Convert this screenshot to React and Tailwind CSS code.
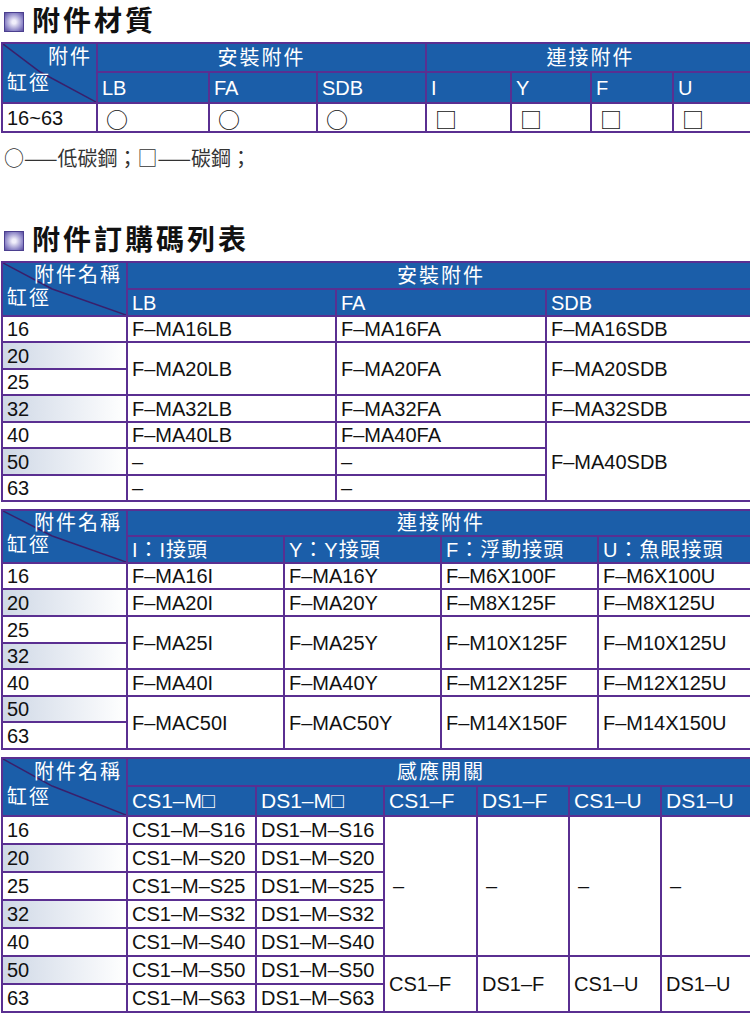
import React from 'react';

const B = 'border-2 border-[#5a2f91]';
const F = { fontFamily: '"Liberation Sans", "Noto Sans CJK TC", sans-serif' };

function Title({ text }) {
  return (
    <div className="flex items-center gap-2 pl-1 h-[36px]">
      <div className="w-[20px] h-[20px] border border-[#4b3f8f] bg-[radial-gradient(circle,#f0eefa_15%,#8c85c6_70%,#5b4fa0)]" />
      <div className="text-[28px] leading-none font-bold tracking-[3px] text-[#111]">{text}</div>
    </div>
  );
}

function Corner({ top, bottom, h1, h2 }) {
  return (
    <th rowSpan={2} className={`${B} relative p-0 align-top`} style={{ height: h1 + h2 }}>
      <svg className="absolute inset-0 w-full h-full" preserveAspectRatio="none" viewBox="0 0 100 100">
        <line x1="0" y1="0" x2="40" y2={(h1 / (h1 + h2)) * 100} stroke="#3a1f6b" strokeWidth="1.5" vectorEffect="non-scaling-stroke" />
        <line x1="40" y1={(h1 / (h1 + h2)) * 100} x2="100" y2="100" stroke="#3a1f6b" strokeWidth="1.5" vectorEffect="non-scaling-stroke" />
      </svg>
      <div className="relative flex flex-col h-full font-normal">
        <div className="text-right pr-1 tracking-[2px]" style={{ height: h1 - 2, lineHeight: h1 - 2 + 'px' }}>{top}</div>
        <div className="text-left pl-1 tracking-[2px]" style={{ lineHeight: h2 - 6 + 'px' }}>{bottom}</div>
      </div>
    </th>
  );
}

const th = `${B} font-normal text-left pl-1 p-0 leading-[20px]`;
const td = `${B} px-1 py-0 text-left leading-[20px]`;
const grad = 'bg-gradient-to-r from-[#cfd8e6] to-white';
const tbl = 'border-collapse table-fixed w-[753px] ml-[1px] text-[20px]';

export default function App() {
  return (
    <div className="w-[750px] overflow-hidden bg-white text-[20px] text-[#111]" style={F}>
      <div className="pt-[4px]"><Title text="附件材質" /></div>
      <table className={`${tbl} mt-[2px]`}>
        <colgroup>
          {[95, 112, 108, 109, 85, 80, 82, 82].map((w, i) => <col key={i} style={{ width: w }} />)}
        </colgroup>
        <thead className="bg-[#1b5ea9] text-white">
          <tr className="h-[29px]">
            <Corner top="附件" bottom="缸徑" h1={29} h2={31} />
            <th colSpan={3} className={`${B} font-normal text-center tracking-[2px] leading-[20px]`}>安裝附件</th>
            <th colSpan={4} className={`${B} font-normal text-center tracking-[2px] leading-[20px]`}>連接附件</th>
          </tr>
          <tr className="h-[31px]">
            {['LB', 'FA', 'SDB', 'I', 'Y', 'F', 'U'].map(t => <th key={t} className={th}>{t}</th>)}
          </tr>
        </thead>
        <tbody>
          <tr className="h-[29px]">
            <td className={td}>16~63</td>
            {['○', '○', '○', '□', '□', '□', '□'].map((t, i) => <td key={i} className={`${td} pl-2 text-[22px]`} style={{ fontFamily: '"Noto Sans CJK TC", sans-serif' }}>{t}</td>)}
          </tr>
        </tbody>
      </table>
      <div className="mt-[10px] pl-1 text-[#333] text-[20px]" style={{ fontFamily: '"Noto Sans CJK TC", sans-serif' }}>○——低碳鋼；□——碳鋼；</div>

      <div className="mt-[50px]"><Title text="附件訂購碼列表" /></div>
      <table className={`${tbl} mt-[2px]`}>
        <colgroup>{[125, 209, 210, 209].map((w, i) => <col key={i} style={{ width: w }} />)}</colgroup>
        <thead className="bg-[#1b5ea9] text-white">
          <tr className="h-[27px]">
            <Corner top="附件名稱" bottom="缸徑" h1={27} h2={27} />
            <th colSpan={3} className={`${B} font-normal text-center tracking-[2px] leading-[20px]`}>安裝附件</th>
          </tr>
          <tr className="h-[27px]">
            {['LB', 'FA', 'SDB'].map(t => <th key={t} className={th}>{t}</th>)}
          </tr>
        </thead>
        <tbody>
          <tr className="h-[26px]"><td className={td}>16</td><td className={td}>F–MA16LB</td><td className={td}>F–MA16FA</td><td className={td}>F–MA16SDB</td></tr>
          <tr className="h-[27px]"><td className={`${td} ${grad}`}>20</td><td rowSpan={2} className={td}>F–MA20LB</td><td rowSpan={2} className={td}>F–MA20FA</td><td rowSpan={2} className={td}>F–MA20SDB</td></tr>
          <tr className="h-[26px]"><td className={td}>25</td></tr>
          <tr className="h-[27px]"><td className={`${td} ${grad}`}>32</td><td className={td}>F–MA32LB</td><td className={td}>F–MA32FA</td><td className={td}>F–MA32SDB</td></tr>
          <tr className="h-[26px]"><td className={td}>40</td><td className={td}>F–MA40LB</td><td className={td}>F–MA40FA</td><td rowSpan={3} className={td}>F–MA40SDB</td></tr>
          <tr className="h-[27px]"><td className={`${td} ${grad}`}>50</td><td className={td}>–</td><td className={td}>–</td></tr>
          <tr className="h-[26px]"><td className={td}>63</td><td className={td}>–</td><td className={td}>–</td></tr>
        </tbody>
      </table>

      <table className={`${tbl} mt-[7px]`}>
        <colgroup>{[125, 157, 157, 157, 157].map((w, i) => <col key={i} style={{ width: w }} />)}</colgroup>
        <thead className="bg-[#1b5ea9] text-white">
          <tr className="h-[26px]">
            <Corner top="附件名稱" bottom="缸徑" h1={26} h2={27} />
            <th colSpan={4} className={`${B} font-normal text-center tracking-[2px] leading-[20px]`}>連接附件</th>
          </tr>
          <tr className="h-[27px]">
            {['I：I接頭', 'Y：Y接頭', 'F：浮動接頭', 'U：魚眼接頭'].map(t => <th key={t} className={`${th} tracking-[1px]`}>{t}</th>)}
          </tr>
        </thead>
        <tbody>
          <tr className="h-[26px]"><td className={td}>16</td><td className={td}>F–MA16I</td><td className={td}>F–MA16Y</td><td className={td}>F–M6X100F</td><td className={td}>F–M6X100U</td></tr>
          <tr className="h-[27px]"><td className={`${td} ${grad}`}>20</td><td className={td}>F–MA20I</td><td className={td}>F–MA20Y</td><td className={td}>F–M8X125F</td><td className={td}>F–M8X125U</td></tr>
          <tr className="h-[27px]"><td className={td}>25</td><td rowSpan={2} className={td}>F–MA25I</td><td rowSpan={2} className={td}>F–MA25Y</td><td rowSpan={2} className={td}>F–M10X125F</td><td rowSpan={2} className={td}>F–M10X125U</td></tr>
          <tr className="h-[26px]"><td className={`${td} ${grad}`}>32</td></tr>
          <tr className="h-[27px]"><td className={td}>40</td><td className={td}>F–MA40I</td><td className={td}>F–MA40Y</td><td className={td}>F–M12X125F</td><td className={td}>F–M12X125U</td></tr>
          <tr className="h-[26px]"><td className={`${td} ${grad}`}>50</td><td rowSpan={2} className={td}>F–MAC50I</td><td rowSpan={2} className={td}>F–MAC50Y</td><td rowSpan={2} className={td}>F–M14X150F</td><td rowSpan={2} className={td}>F–M14X150U</td></tr>
          <tr className="h-[27px]"><td className={td}>63</td></tr>
        </tbody>
      </table>

      <table className={`${tbl} mt-[7px]`}>
        <colgroup>{[125, 129, 128, 93, 92, 92, 94].map((w, i) => <col key={i} style={{ width: w }} />)}</colgroup>
        <thead className="bg-[#1b5ea9] text-white">
          <tr className="h-[28px]">
            <Corner top="附件名稱" bottom="缸徑" h1={28} h2={30} />
            <th colSpan={6} className={`${B} font-normal text-center tracking-[2px] leading-[20px]`}>感應開關</th>
          </tr>
          <tr className="h-[30px]">
            {['CS1–M□', 'DS1–M□', 'CS1–F', 'DS1–F', 'CS1–U', 'DS1–U'].map(t => <th key={t} className={`${th} text-[21px]`}>{t}</th>)}
          </tr>
        </thead>
        <tbody>
          {['16', '20', '25', '32', '40', '50', '63'].map((n, i) => (
            <tr key={n} className="h-[28px]">
              <td className={`${td} ${i % 2 ? grad : ''}`}>{n}</td>
              <td className={td}>CS1–M–S{n}</td>
              <td className={td}>DS1–M–S{n}</td>
              {i === 0 && ['–', '–', '–', '–'].map((t, j) => <td key={j} rowSpan={5} className={`${td} pl-2`}>{t}</td>)}
              {i === 5 && ['CS1–F', 'DS1–F', 'CS1–U', 'DS1–U'].map(t => <td key={t} rowSpan={2} className={td}>{t}</td>)}
            </tr>
          ))}
        </tbody>
      </table>
      <div className="h-[22px]" />
    </div>
  );
}
